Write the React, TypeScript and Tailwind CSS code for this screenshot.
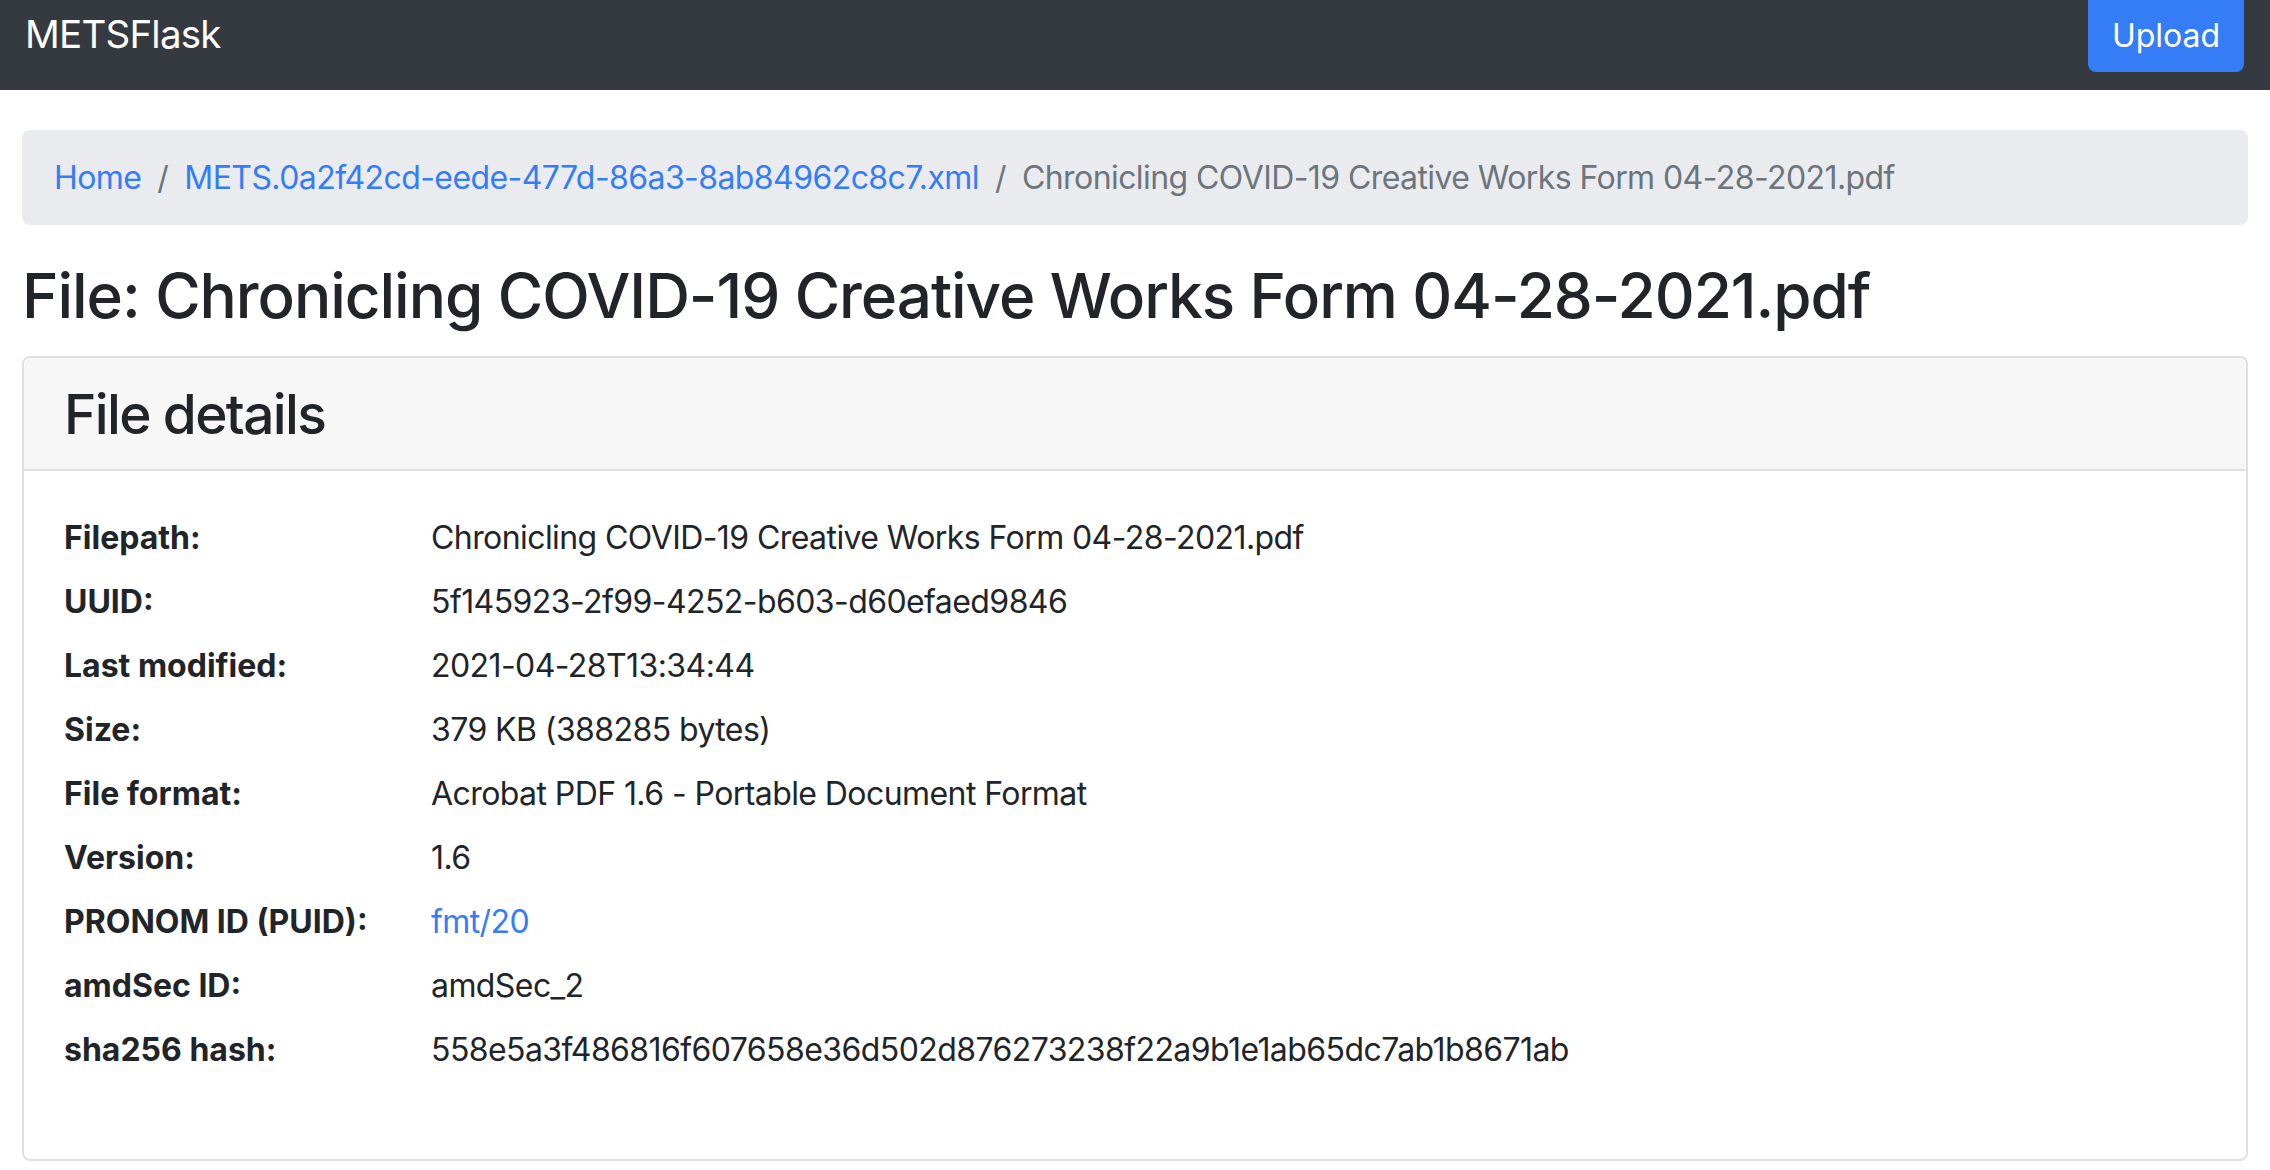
import React from "react";

const rows: { label: string; value: string; link?: boolean }[] = [
  { label: "Filepath:", value: "Chronicling COVID-19 Creative Works Form 04-28-2021.pdf" },
  { label: "UUID:", value: "5f145923-2f99-4252-b603-d60efaed9846" },
  { label: "Last modified:", value: "2021-04-28T13:34:44" },
  { label: "Size:", value: "379 KB (388285 bytes)" },
  { label: "File format:", value: "Acrobat PDF 1.6 - Portable Document Format" },
  { label: "Version:", value: "1.6" },
  { label: "PRONOM ID (PUID):", value: "fmt/20", link: true },
  { label: "amdSec ID:", value: "amdSec_2" },
  { label: "sha256 hash:", value: "558e5a3f486816f607658e36d502d876273238f22a9b1e1ab65dc7ab1b8671ab" },
];

export default function App() {
  return (
    <div className="min-h-[1170px] bg-white font-['Inter','Noto_Sans',sans-serif] text-[#212529]">
      <nav className="flex h-[90px] justify-between bg-[#343a40] pl-[25px] pr-[26px]">
        <a className="mt-[4px] text-[38.5px] leading-[60px] tracking-[-0.02em] text-white">METSFlask</a>
        <button className="h-[72px] w-[156px] rounded-b-[8px] bg-[#347df6] text-[32px] leading-[48px] text-white">
          Upload
        </button>
      </nav>
      <main className="px-[22px] pt-[40px]">
        <ol className="flex h-[95px] items-center rounded-[8px] bg-[#e9ebef] px-[32px] text-[32px] tracking-[-0.018em]">
          <li className="text-[#347df6]">Home</li>
          <li className="px-[16px] text-[#6c757d]">/</li>
          <li className="text-[#347df6]">METS.0a2f42cd-eede-477d-86a3-8ab84962c8c7.xml</li>
          <li className="px-[16px] text-[#6c757d]">/</li>
          <li className="text-[#6c757d]">Chronicling COVID-19 Creative Works Form 04-28-2021.pdf</li>
        </ol>
        <h2 className="mt-[32px] mb-[22px] h-[77px] text-[62px] font-medium leading-[77px] tracking-[-0.017em]">
          File: Chronicling COVID-19 Creative Works Form 04-28-2021.pdf
        </h2>
        <div className="rounded-[8px] border-2 border-[#dfdfdf]">
          <div className="flex h-[113px] items-center rounded-t-[6px] border-b-2 border-[#dfdfdf] bg-[#f7f7f7] px-[40px]">
            <h3 className="text-[55px] font-medium leading-[1.2] tracking-[-0.03em]">File details</h3>
          </div>
          <div className="px-[40px] pt-[35px] pb-[77px]">
            {rows.map((r) => (
              <div key={r.label} className="grid h-[64px] grid-cols-[367px_1fr] items-center text-[32px] leading-[48px]">
                <div className="font-bold">{r.label}</div>
                <div className={r.link ? "tracking-[-0.018em] text-[#347df6]" : "tracking-[-0.018em]"}>{r.value}</div>
              </div>
            ))}
          </div>
        </div>
      </main>
    </div>
  );
}
